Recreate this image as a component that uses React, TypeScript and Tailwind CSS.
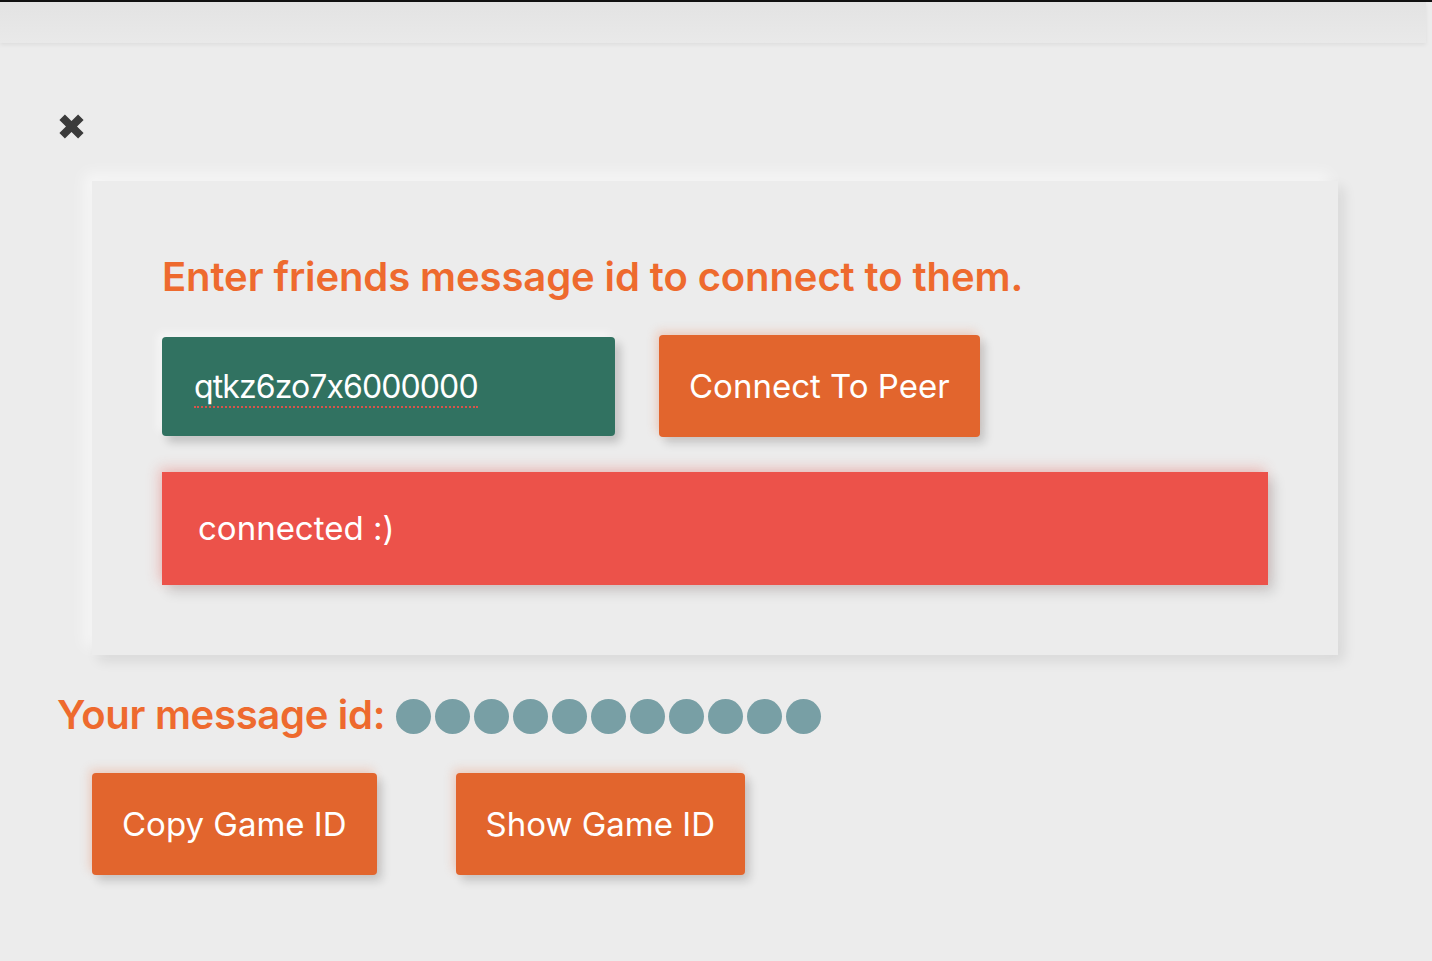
import React from 'react';

const orangeBtn =
  "bg-[#e2652d] text-white text-[33px] leading-[38px] px-[30px] rounded-[4px] shadow-[-3px_-4px_10px_rgba(240,120,70,0.25),5px_6px_10px_rgba(0,0,0,0.16)]";

export default function App() {
  const dots = Array.from({ length: 11 });

  return (
    <div className="min-h-screen bg-[#ececec] font-['Inter',sans-serif] [font-feature-settings:'calt'_0] overflow-hidden">
      {/* top bar */}
      <div className="h-[2px] bg-[#111]" />
      <div className="h-[41px] mr-[6px] bg-gradient-to-b from-[#e3e3e3] to-[#e9e9e9] shadow-[0_2px_4px_rgba(0,0,0,0.06)]" />

      <div className="pl-[57px] pt-[70px]">
        {/* close */}
        <svg width="27" height="27" viewBox="0 0 26 26" className="ml-[1px] block">
          <path d="M4 4 L22 22 M22 4 L4 22" stroke="#3b3b3b" strokeWidth="7.5" strokeLinecap="butt" />
        </svg>

        {/* card */}
        <div className="ml-[35px] mt-[41px] w-[1246px] px-[70px] pt-[72px] pb-[70px] bg-[#ececec] shadow-[-8px_-8px_14px_rgba(255,255,255,0.55),6px_6px_12px_rgba(0,0,0,0.09)]">
          <h2 className="text-[40px] leading-[48px] font-semibold text-[#ee6a2e] tracking-[-0.1px]">
            Enter friends message id to connect to them.
          </h2>

          <div className="mt-[34px] flex items-center gap-[44px]">
            <div className="w-[453px] h-[99px] bg-[#317261] rounded-[4px] pl-[32px] pt-[3px] flex items-center shadow-[-4px_-4px_10px_rgba(255,255,255,0.6),5px_6px_10px_rgba(0,0,0,0.2)]">
              <span className="text-white text-[32px] leading-[38px] tracking-[-0.9px] border-b-2 border-dotted border-[#d9544a]">
                qtkz6zo7x6000000
              </span>
            </div>
            <button className={`${orangeBtn} h-[102px]`}>Connect To Peer</button>
          </div>

          <div className="mt-[35px] h-[113px] bg-[#ec524a] pl-[36px] flex items-center text-white text-[33px] shadow-[-3px_-4px_12px_rgba(236,82,74,0.3),6px_7px_12px_rgba(0,0,0,0.14)]">
            connected :)
          </div>
        </div>

        {/* your id */}
        <div className="mt-[36px] flex items-center">
          <span className="text-[40px] leading-[48px] font-semibold text-[#ee6a2e] tracking-[-0.3px]">
            Your message id:
          </span>
          <div className="ml-[11px] flex gap-[4px] mt-[2px]">
            {dots.map((_, i) => (
              <span key={i} className="w-[35px] h-[35px] rounded-full bg-[#789fa5]" />
            ))}
          </div>
        </div>

        <div className="ml-[35px] mt-[34px] flex gap-[79px]">
          <button className={`${orangeBtn} h-[102px]`}>Copy Game ID</button>
          <button className={`${orangeBtn} h-[102px]`}>Show Game ID</button>
        </div>
      </div>
    </div>
  );
}
